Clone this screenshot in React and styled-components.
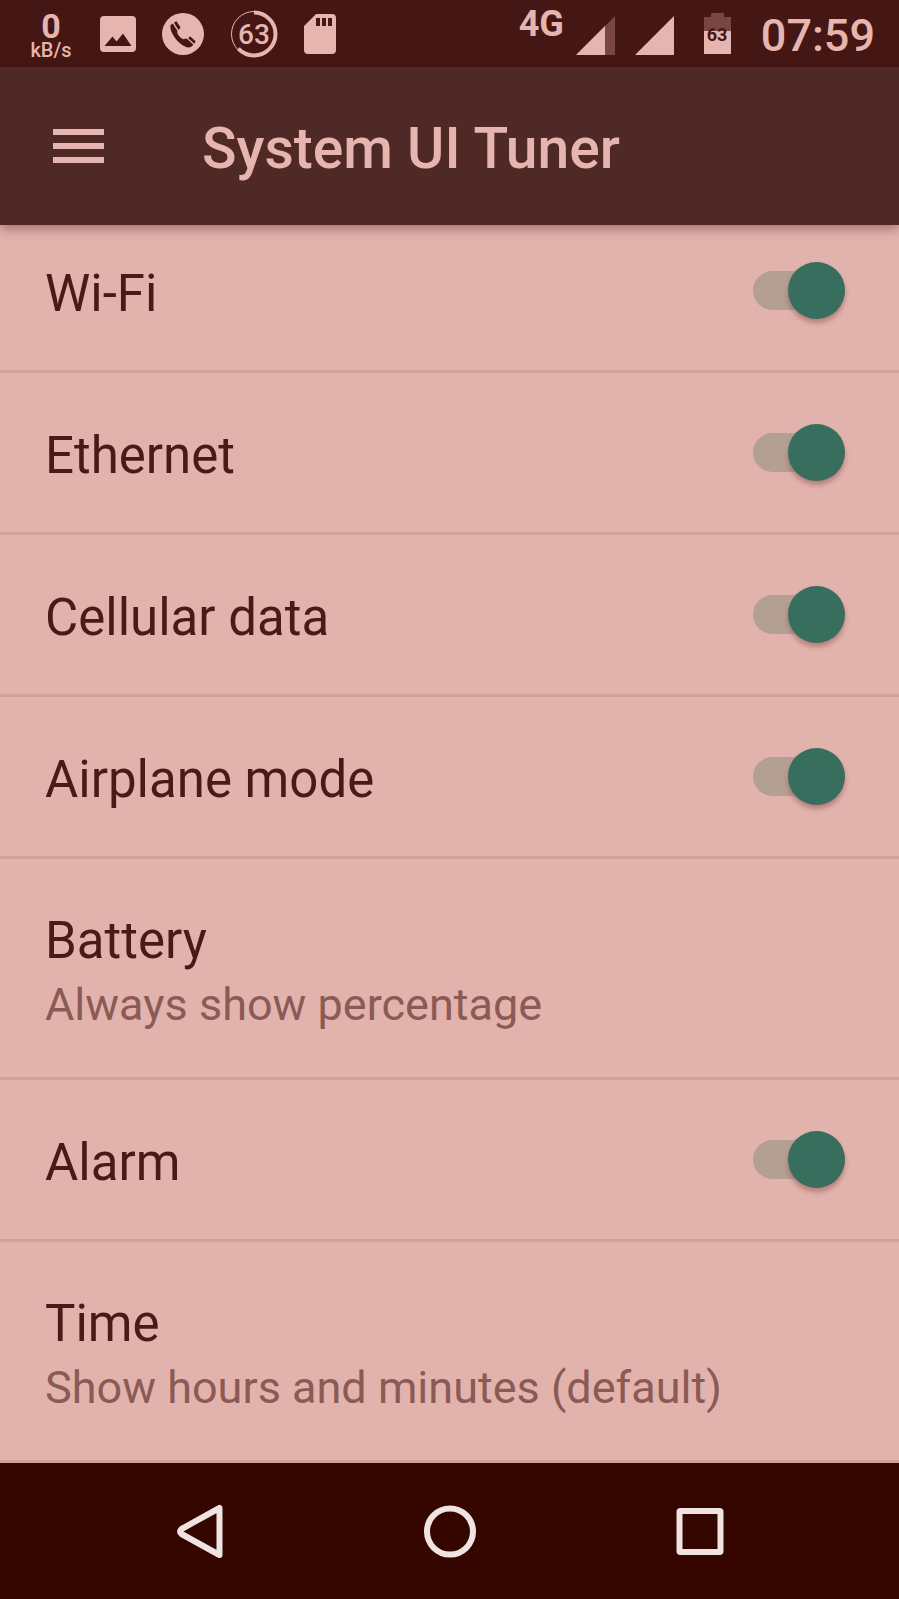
import React, { useState } from 'react';
import styled, { createGlobalStyle } from 'styled-components';

const settings = [
  { id: 'wifi', title: 'Wi-Fi', toggle: true },
  { id: 'ethernet', title: 'Ethernet', toggle: true },
  { id: 'cellular', title: 'Cellular data', toggle: true },
  { id: 'airplane', title: 'Airplane mode', toggle: true },
  { id: 'battery', title: 'Battery', summary: 'Always show percentage' },
  { id: 'alarm', title: 'Alarm', toggle: true },
  { id: 'time', title: 'Time', summary: 'Show hours and minutes (default)' },
];

const App = () => {
  const [enabled, setEnabled] = useState({
    wifi: true,
    ethernet: true,
    cellular: true,
    airplane: true,
    alarm: true,
  });

  const toggle = (id) => setEnabled({ ...enabled, [id]: !enabled[id] });

  return (
    <Screen>
      <GlobalStyle />
      <StatusBar>
        <Notifications>
          <NetSpeed>
            <SpeedValue>0</SpeedValue>
            <SpeedUnit>kB/s</SpeedUnit>
          </NetSpeed>
          <ImageIcon />
          <PhoneIcon />
          <BatteryRing level={63} />
          <SdCardIcon />
        </Notifications>
        <System>
          <Mobile>
            <Network>4G</Network>
            <Signals>
              <SignalIcon partial />
              <SignalIcon />
            </Signals>
          </Mobile>
          <BatteryIcon level={63} />
          <Clock>07:59</Clock>
        </System>
      </StatusBar>

      <AppBar>
        <MenuButton type="button" aria-label="Open menu">
          <MenuLine />
          <MenuLine />
          <MenuLine />
        </MenuButton>
        <Title>System UI Tuner</Title>
      </AppBar>

      <List>
        {settings.map((item) =>
          item.toggle ? (
            <SwitchRow key={item.id} htmlFor={item.id}>
              <RowTitle>{item.title}</RowTitle>
              <Switch
                id={item.id}
                type="checkbox"
                role="switch"
                checked={enabled[item.id]}
                onChange={() => toggle(item.id)}
              />
            </SwitchRow>
          ) : (
            <OptionRow key={item.id} type="button">
              <RowTitle>{item.title}</RowTitle>
              <Summary>{item.summary}</Summary>
            </OptionRow>
          )
        )}
      </List>

      <NavBar>
        <NavButton type="button" aria-label="Back">
          <svg width="54" height="54" viewBox="0 0 54 54">
            <path d="M46.500 4V51L8.500 30Q5.500 27.500 8.500 25Z" />
          </svg>
        </NavButton>
        <NavButton type="button" aria-label="Home">
          <svg width="54" height="54" viewBox="0 0 54 54">
            <circle cx="27" cy="27.500" r="23" />
          </svg>
        </NavButton>
        <NavButton type="button" aria-label="Recent apps">
          <svg width="54" height="54" viewBox="0 0 54 54">
            <rect x="6.500" y="7" width="41" height="41" rx="1" />
          </svg>
        </NavButton>
      </NavBar>
    </Screen>
  );
};

const ImageIcon = () => (
  <svg width="36" height="36" viewBox="0 0 36 36">
    <path
      fill="#e6b5b0"
      fillRule="evenodd"
      d="M4 0H32A4 4 0 0 1 36 4V32A4 4 0 0 1 32 36H4A4 4 0 0 1 0 32V4A4 4 0 0 1 4 0ZM4.500 30H31.500L23 17.500L16.500 25.500L12.500 20.500Z"
    />
  </svg>
);

const PhoneIcon = () => (
  <svg width="42" height="42" viewBox="0 0 42 42">
    <circle cx="21" cy="21" r="21" fill="#e6b5b0" />
    <g fill="#441714">
      <path d="M8.500 12L10.800 10.500L15.300 17.800Q14.600 20 16.500 22.200Q19.500 26 22 26.200Q24 25 25.200 26L31.500 31.800Q29 35 25.500 34.500Q18 32 13 25Q7.500 17 8.500 12Z" />
      <path d="M12 9.700L14.300 8L18.600 14.500L16.400 17Z" />
      <path d="M26.200 25.300L28 23.200L33.600 28.200L32.300 30.800Z" />
    </g>
  </svg>
);

const BatteryRing = ({ level }) => (
  <svg width="48" height="48" viewBox="0 0 48 48">
    <circle cx="24" cy="24" r="22.500" fill="none" stroke="#e6b5b0" strokeWidth="1" />
    <circle
      cx="24"
      cy="24"
      r="21.500"
      fill="none"
      stroke="#e6b5b0"
      strokeWidth="4"
      pathLength="100"
      strokeDasharray={`${level} 100`}
      transform="rotate(-90 24 24)"
    />
    <RingText x="24" y="34">{level}</RingText>
  </svg>
);

const SdCardIcon = () => (
  <svg width="32" height="40" viewBox="0 0 32 40">
    <path
      fill="#e6b5b0"
      fillRule="evenodd"
      d="M12 0H28A4 4 0 0 1 32 4V36A4 4 0 0 1 28 40H4A4 4 0 0 1 0 36V12ZM12 4V12H16V4ZM18 4V12H22V4ZM24 4V12H28V4Z"
    />
  </svg>
);

const SignalIcon = ({ partial }) => (
  <svg width="39" height="43" viewBox="0 0 39 43">
    <path fill={partial ? '#7a4642' : '#e6b5b0'} d="M39 4V43H0Z" />
    {partial && <path fill="#e6b5b0" d="M29 14V43H0Z" />}
  </svg>
);

const BatteryIcon = ({ level }) => (
  <svg width="27" height="41" viewBox="0 0 27 41">
    <path fill="#7a4642" d="M7 0H20V4H27V18H0V4H7Z" />
    <path fill="#e6b5b0" d="M0 18H27V41H0Z" />
    <BatteryText x="13" y="28">{level}</BatteryText>
  </svg>
);

const GlobalStyle = createGlobalStyle`
  * {
    box-sizing: border-box;
  }

  body {
    margin: 0;
    background-color: #e2b3ad;
    font-family: Roboto, 'Liberation Sans', sans-serif;
  }

  button {
    border: none;
    background: none;
    font-family: inherit;
    cursor: pointer;
  }
`;

const Screen = styled.div`
  display: flex;
  flex-direction: column;
  min-height: 100vh;
`;

const StatusBar = styled.div`
  display: flex;
  justify-content: space-between;
  height: 67px;
  padding: 0 24px 0 28px;
  background-color: #441714;
  color: #e6b5b0;
  position: relative;
  z-index: 1;
`;

const Notifications = styled.div`
  display: flex;
  align-items: center;
  gap: 26px;
`;

const NetSpeed = styled.div`
  display: flex;
  flex-direction: column;
  align-items: center;
  align-self: flex-start;
  width: 46px;
  padding-top: 11px;
`;

const SpeedValue = styled.span`
  font-size: 34px;
  line-height: 31px;
  font-weight: 700;
`;

const SpeedUnit = styled.span`
  font-size: 20px;
  line-height: 16px;
  font-weight: 500;
`;

const System = styled.div`
  display: flex;
  align-items: center;
  gap: 30px;
`;

const Mobile = styled.div`
  display: flex;
  align-items: center;
  align-self: stretch;
  gap: 12px;
`;

const Network = styled.span`
  align-self: flex-start;
  padding-top: 6px;
  font-size: 36px;
  line-height: 36px;
  font-weight: 700;
`;

const Signals = styled.div`
  display: flex;
  gap: 20px;
`;

const Clock = styled.span`
  padding-top: 5px;
  font-size: 45px;
  line-height: 48px;
  font-weight: 500;
`;

const RingText = styled.text`
  fill: #e6b5b0;
  font-size: 28px;
  font-weight: 500;
  text-anchor: middle;
`;

const BatteryText = styled.text`
  fill: #441714;
  font-size: 18px;
  font-weight: 700;
  text-anchor: middle;
`;

const AppBar = styled.header`
  display: flex;
  align-items: center;
  gap: 98px;
  height: 158px;
  padding: 0 53px;
  background-color: #4f2926;
  box-shadow: 0 4px 10px rgba(80, 20, 20, 0.4);
  position: relative;
  z-index: 1;
`;

const MenuButton = styled.button`
  display: flex;
  flex-direction: column;
  gap: 8px;
  width: 51px;
  padding: 0;
`;

const MenuLine = styled.span`
  height: 6px;
  background-color: #e6b5b0;
`;

const Title = styled.h1`
  margin: 0;
  padding-top: 6px;
  color: #e6b5b0;
  font-size: 57px;
  line-height: 64px;
  font-weight: 500;
`;

// the list is scrolled a little, so its first row starts behind the app bar
const List = styled.main`
  flex: 1;
  margin-top: -14px;
`;

const SwitchRow = styled.label`
  display: flex;
  align-items: center;
  justify-content: space-between;
  height: 162px;
  padding: 0 54px 0 45px;
  border-bottom: 3px solid #cfa29b;
  cursor: pointer;
`;

const OptionRow = styled.button`
  display: flex;
  flex-direction: column;
  align-items: flex-start;
  justify-content: center;
  width: 100%;
  height: 221px;
  padding: 0 45px;
  border-bottom: 3px solid #cfa29b;
  text-align: left;
`;

const RowTitle = styled.span`
  padding-top: 6px;
  color: #4a1b16;
  font-size: 51px;
  line-height: 68px;
`;

const Summary = styled.span`
  color: #8c5a54;
  font-size: 45px;
  line-height: 60px;
`;

const Switch = styled.input`
  appearance: none;
  display: flex;
  align-items: center;
  justify-content: flex-end;
  width: 92px;
  height: 39px;
  margin: 0;
  background-color: #b49f95;
  border-radius: 20px;
  cursor: pointer;

  &::before {
    content: '';
    flex-shrink: 0;
    width: 57px;
    height: 57px;
    border-radius: 50%;
    background-color: #376e5d;
    box-shadow: 0 4px 5px rgba(120, 50, 50, 0.4);
  }

  &:not(:checked) {
    justify-content: flex-start;
  }
`;

const NavBar = styled.nav`
  display: flex;
  justify-content: center;
  align-items: center;
  gap: 196px;
  height: 136px;
  background-color: #350500;
`;

const NavButton = styled.button`
  padding: 0;
  line-height: 0;

  svg {
    fill: none;
    stroke: #f0e4e2;
    stroke-width: 6;
    stroke-linejoin: round;
  }
`;

export default App;
